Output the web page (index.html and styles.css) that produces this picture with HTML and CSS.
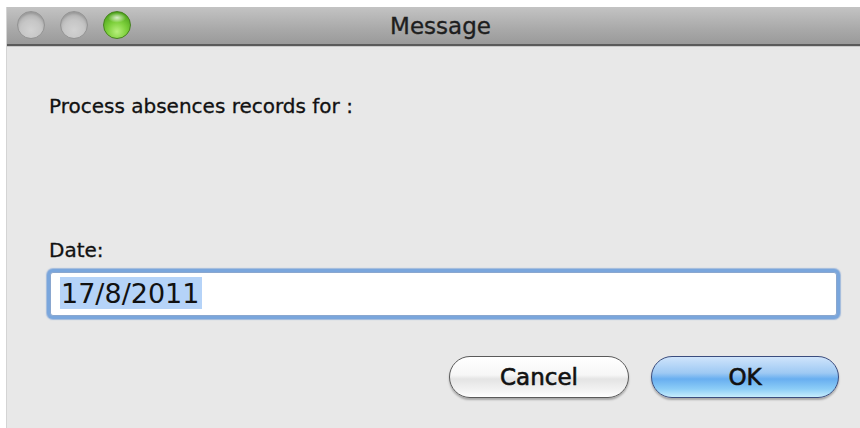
FILE: index.html
```html
<!DOCTYPE html>
<html lang="en">
<head>
<meta charset="utf-8">
<title>Message</title>
<link rel="stylesheet" href="styles.css">
</head>
<body>
  <div class="window">
    <div class="titlebar">
      <div class="lights">
        <span class="light light-off"></span>
        <span class="light light-off"></span>
        <span class="light light-zoom"></span>
      </div>
      <div class="title">Message</div>
    </div>
    <div class="content">
      <p class="prompt">Process absences records for :</p>
      <label class="field-label" for="date">Date:</label>
      <div class="field">
        <span class="field-value"><span class="selection">17/8/2011</span></span>
      </div>
      <div class="actions">
        <button class="btn btn-cancel" type="button">Cancel</button>
        <button class="btn btn-ok" type="button">OK</button>
      </div>
    </div>
  </div>
</body>
</html>
```

FILE: styles.css
```css
html, body {
  margin: 0;
  padding: 0;
  background: #ffffff;
}

body {
  width: 860px;
  height: 428px;
  overflow: hidden;
  font-family: "DejaVu Sans", "Lucida Grande", sans-serif;
  color: #1a1a1a;
}

.window {
  margin: 7px 0 0 6px;
  height: 421px;
  display: flex;
  flex-direction: column;
  background: #e8e8e8;
  border-left: 1px solid #d4d4d4;
}

/* title bar */
.titlebar {
  position: relative;
  height: 37px;
  flex: none;
  background: linear-gradient(#c3c3c3, #a9a9a9 60%, #9a9a9a);
  border-bottom: 2px solid #5a5a5a;
  box-shadow: 0 1px 0 #c9c9c9;
  display: flex;
  align-items: center;
  justify-content: center;
}

.lights {
  position: absolute;
  left: 10px;
  top: 4px;
  display: flex;
  gap: 15px;
}

.light {
  width: 28px;
  height: 28px;
  border-radius: 50%;
  box-sizing: border-box;
}

.light-off {
  background: radial-gradient(circle at 50% 70%, #d2d2d2 0%, #c6c6c6 45%, #adadad 80%, #9a9a9a 100%);
  border: 1px solid #939393;
  box-shadow: inset 0 2px 2px rgba(0,0,0,0.12);
}

.light-zoom {
  background:
    radial-gradient(ellipse 9px 5px at 50% 22%, rgba(255,255,255,0.75), rgba(255,255,255,0) 100%),
    radial-gradient(circle at 50% 75%, #b8ef7d 0%, #7fd13d 40%, #4fa51c 80%, #3d8a12 100%);
  border: 1px solid #46831f;
}

.title {
  font-size: 23px;
  color: #1e1e1e;
  margin-left: 14px;
  -webkit-text-stroke: 0.35px #1e1e1e;
}

/* dialog body */
.content {
  flex: 1;
  padding: 48px 0 0 42px;
  display: flex;
  flex-direction: column;
}

.prompt {
  margin: 0;
  font-size: 20px;
  line-height: 24px;
  color: #111;
  -webkit-text-stroke: 0.3px #111;
}

.field-label {
  margin-top: 120px;
  font-size: 20px;
  line-height: 24px;
  color: #111;
  -webkit-text-stroke: 0.3px #111;
}

.field {
  margin-top: 10px;
  margin-left: 1px;
  width: 787px;
  height: 44px;
  box-sizing: border-box;
  background: #ffffff;
  border: 1px solid #8aa7cf;
  border-radius: 3px;
  box-shadow: 0 0 0 3px #7aa6dc, 0 0 1px 4px rgba(90,140,210,0.5);
  display: flex;
  align-items: center;
  padding-left: 9px;
}

.field-value {
  font-size: 27px;
  line-height: 36px;
  color: #111;
}

.selection {
  background: #b5d3f8;
  padding: 1px 3px 0 1px;
}

.actions {
  margin-top: 40px;
  margin-right: 21px;
  display: flex;
  justify-content: flex-end;
  gap: 22px;
}

.btn {
  height: 42px;
  border-radius: 21px;
  font-family: "DejaVu Sans", "Lucida Grande", sans-serif;
  font-size: 23px;
  font-weight: normal;
  color: #111;
  -webkit-text-stroke: 0.6px #111;
  padding: 0;
  box-sizing: border-box;
  box-shadow: 0 2px 2px rgba(0,0,0,0.28);
  cursor: default;
}

.btn-cancel {
  width: 180px;
  border: 1.5px solid #5a5a5a;
  background: linear-gradient(#ffffff 0%, #f6f6f6 45%, #e4e4e4 55%, #f4f4f4 85%, #ffffff 100%);
}

.btn-ok {
  width: 188px;
  border: 1.5px solid #3b4d7e;
  background: linear-gradient(#cfe4fb 0%, #9ec9f3 40%, #68aef0 55%, #8ccdf7 80%, #c6edfd 100%);
}
```
